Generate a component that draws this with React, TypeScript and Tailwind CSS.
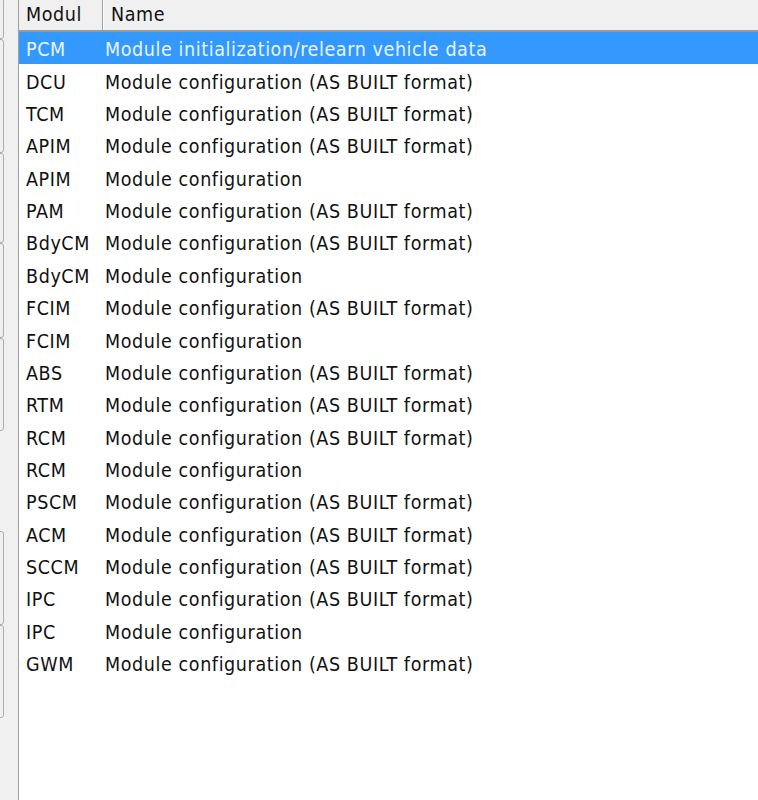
import React from "react";

const rows: [string, string][] = [
  ["PCM", "Module initialization/relearn vehicle data"],
  ["DCU", "Module configuration (AS BUILT format)"],
  ["TCM", "Module configuration (AS BUILT format)"],
  ["APIM", "Module configuration (AS BUILT format)"],
  ["APIM", "Module configuration"],
  ["PAM", "Module configuration (AS BUILT format)"],
  ["BdyCM", "Module configuration (AS BUILT format)"],
  ["BdyCM", "Module configuration"],
  ["FCIM", "Module configuration (AS BUILT format)"],
  ["FCIM", "Module configuration"],
  ["ABS", "Module configuration (AS BUILT format)"],
  ["RTM", "Module configuration (AS BUILT format)"],
  ["RCM", "Module configuration (AS BUILT format)"],
  ["RCM", "Module configuration"],
  ["PSCM", "Module configuration (AS BUILT format)"],
  ["ACM", "Module configuration (AS BUILT format)"],
  ["SCCM", "Module configuration (AS BUILT format)"],
  ["IPC", "Module configuration (AS BUILT format)"],
  ["IPC", "Module configuration"],
  ["GWM", "Module configuration (AS BUILT format)"],
];

function EdgeButton({ h }: { h: string }) {
  return (
    <div
      className={`${h} w-[10px] -ml-[6px] border border-[#adadad] rounded-r-[3px] bg-[#efefef]`}
    />
  );
}

export default function App() {
  return (
    <div
      className="w-[758px] h-[800px] flex bg-[#f0f0f0] overflow-hidden"
      style={{ fontFamily: '"DejaVu Sans Condensed", "DejaVu Sans", sans-serif' }}
    >
      {/* left strip with cut-off buttons */}
      <div className="w-[18px] shrink-0 flex flex-col">
        <div className="h-[41px] w-[10px] -ml-[6px] -mt-[2px] border border-[#adadad] rounded-r-[3px]" />
        <div className="h-[114px] w-[10px] -ml-[6px] border border-[#adadad] rounded-r-[3px]" />
        <div className="h-[90px] w-[10px] -ml-[6px] border border-[#adadad] rounded-r-[3px]" />
        <EdgeButton h="h-[95px]" />
        <EdgeButton h="h-[93px]" />
        <div className="h-[100px]" />
        <EdgeButton h="h-[94px]" />
        <EdgeButton h="h-[93px]" />
      </div>
      {/* list view */}
      <div className="flex-1 flex flex-col bg-white border-l border-[#a0a0a0] text-[19.5px] tracking-[0.6px] leading-none text-[#111]">
        <div className="h-[32px] shrink-0 flex bg-[#f0f0f0] border-b-2 border-[#9a9a9a]">
          <div className="w-[84px] flex items-center pl-[7px] border-r border-[#a0a0a0] shadow-[1px_0_0_#ffffff] text-[#111]">
            Modul
          </div>
          <div className="flex-1 flex items-center pl-[8px] text-[#111]">Name</div>
        </div>
        <div className="flex flex-col">
          {rows.map(([m, n], i) => (
            <div
              key={i}
              className={`h-[32.35px] pt-[4px] flex items-center ${
                i === 0 ? "bg-[#3399ff] text-[#eaf4ff]" : ""
              }`}
            >
              <div className="w-[86px] pl-[7px] whitespace-nowrap">{m}</div>
              <div className="whitespace-nowrap">{n}</div>
            </div>
          ))}
        </div>
      </div>
    </div>
  );
}
